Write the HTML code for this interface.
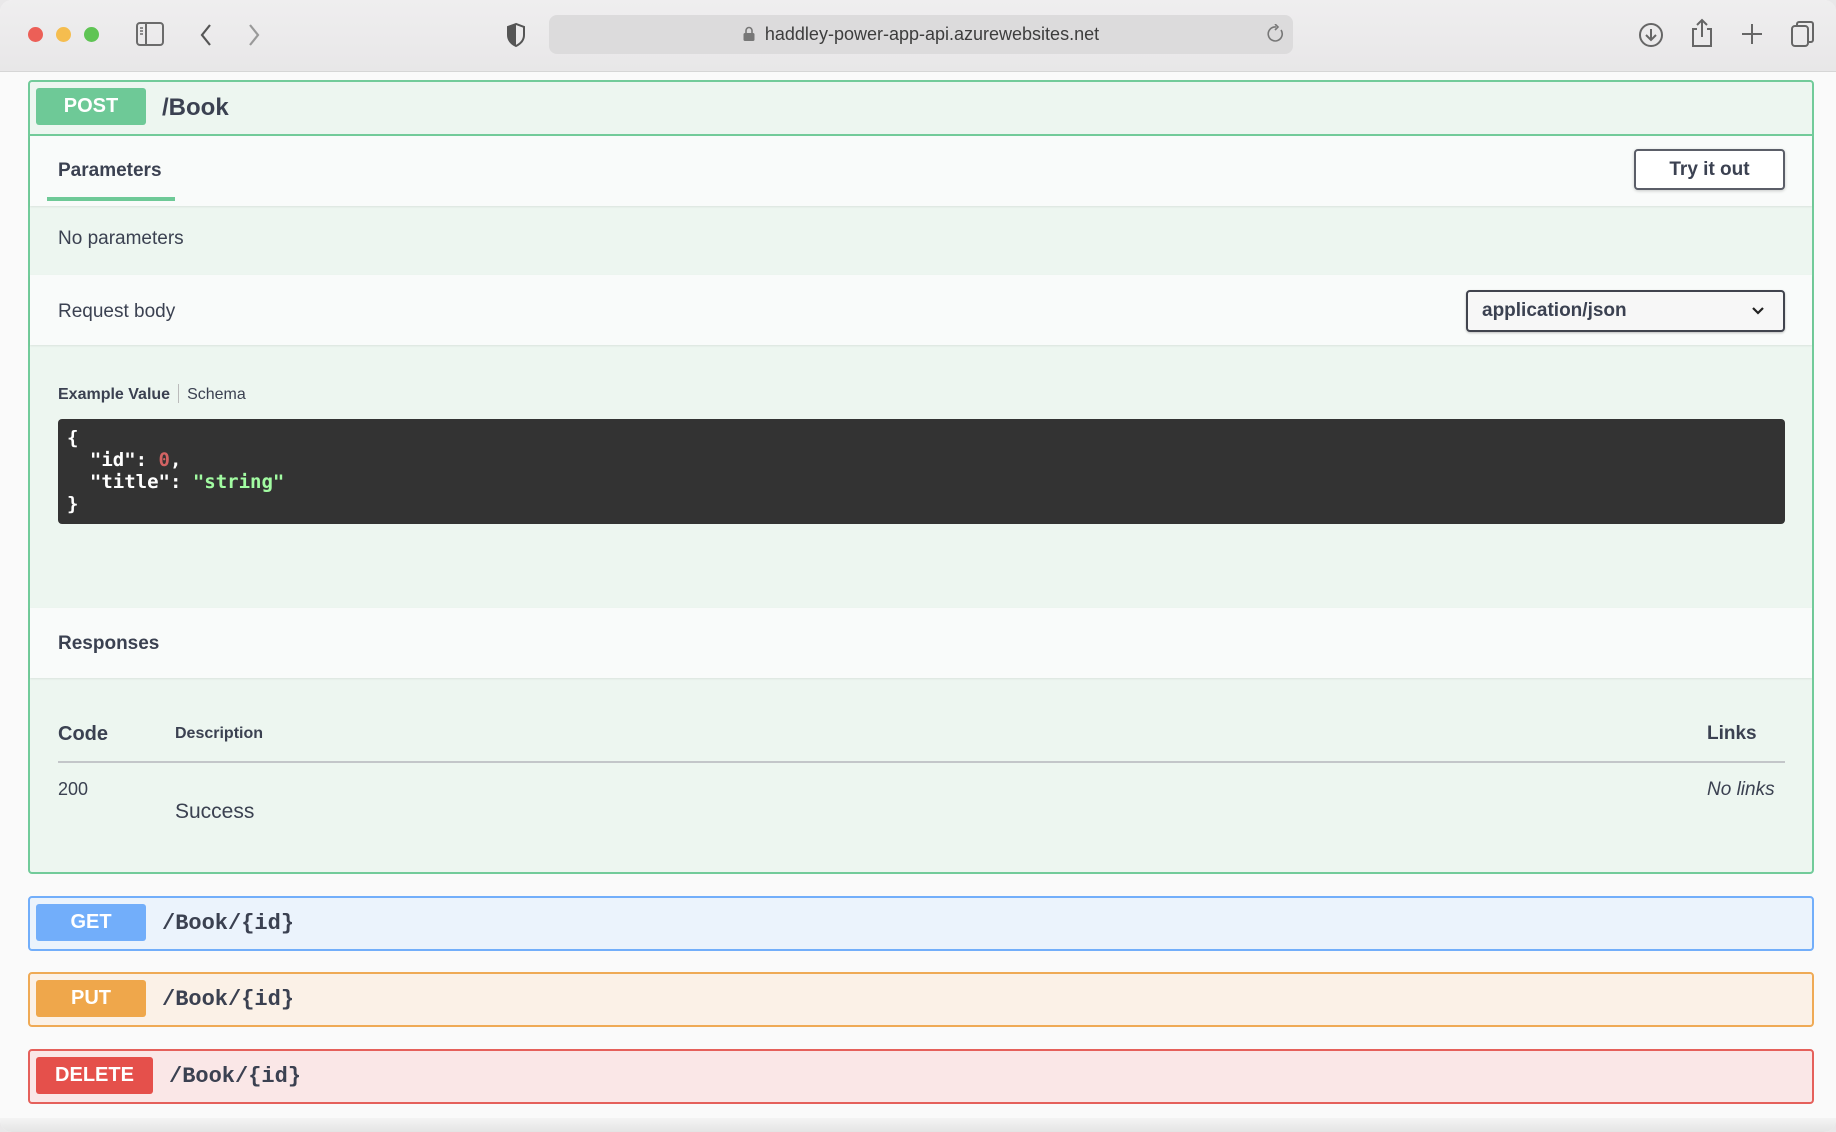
<!DOCTYPE html>
<html><head><meta charset="utf-8"><style>
*{box-sizing:border-box;margin:0;padding:0}
body{width:1836px;height:1132px;overflow:hidden;background:#e9e8e9;font-family:"Liberation Sans",sans-serif;color:#3b4151;position:relative}
.win{position:absolute;left:0;top:0;width:1836px;height:1132px;background:#fafafa;border-radius:12px;overflow:hidden}
.tb{position:absolute;left:0;top:0;width:1836px;height:72px;background:linear-gradient(#efeeef,#e8e7e8);border-bottom:1px solid #d6d6d6}
.dot{position:absolute;top:27px;width:15px;height:15px;border-radius:50%}
.url{position:absolute;left:549px;top:15px;width:744px;height:39px;background:#dcdbdc;border-radius:8px;font-size:18px;color:#3d3d3d;text-align:center;line-height:39px}
.abs{position:absolute}
.op{position:absolute;left:28px;width:1786px;border:2px solid;border-radius:4px}
.badge{position:absolute;left:6px;top:6px;width:110px;height:37px;border-radius:3px;color:#fff;font-weight:bold;font-size:20px;text-align:center;line-height:37px}
.path{position:absolute;top:0;line-height:51px;font-family:"Liberation Mono",monospace;font-weight:bold;font-size:22px;color:#3b4151}
.mono{font-family:"DejaVu Sans Mono","Liberation Mono",monospace}
</style></head><body><div class="win">
<div class="tb">
 <div class="dot" style="left:28px;background:#ec5f57"></div>
 <div class="dot" style="left:56px;background:#f5bd4f"></div>
 <div class="dot" style="left:84px;background:#5fc454"></div>
 <svg class="abs" style="left:136px;top:22px" width="28" height="24" viewBox="0 0 28 24"><rect x="1" y="1" width="26" height="22" rx="3" fill="none" stroke="#6b6b6b" stroke-width="2"/><line x1="10" y1="1" x2="10" y2="23" stroke="#6b6b6b" stroke-width="2"/><path d="M4 6h3M4 9h3M4 12h3" stroke="#6b6b6b" stroke-width="1.5"/></svg>
 <svg class="abs" style="left:198px;top:22px" width="16" height="26"><path d="M12 3L4 13l8 10" fill="none" stroke="#555" stroke-width="2.2"/></svg>
 <svg class="abs" style="left:246px;top:22px" width="16" height="26"><path d="M4 3l8 10-8 10" fill="none" stroke="#999" stroke-width="2.2"/></svg>
 <svg class="abs" style="left:506px;top:22px" width="20" height="26" viewBox="0 0 20 26"><path d="M10 2L2 5v8c0 6 4 9 8 11 4-2 8-5 8-11V5z" fill="none" stroke="#555" stroke-width="2"/><path d="M10 2L2 5v8c0 6 4 9 8 11z" fill="#555"/></svg>
 <div class="url"><svg width="12" height="15" style="margin-right:10px;vertical-align:-1px" viewBox="0 0 12 15"><path d="M3 7V4.5a3 3 0 0 1 6 0V7" fill="none" stroke="#777" stroke-width="1.6"/><rect x="0.5" y="7" width="11" height="8" rx="1.5" fill="#777"/></svg>haddley-power-app-api.azurewebsites.net</div>
 <svg class="abs" style="left:1265px;top:24px" width="20" height="22"><path d="M16 6a7 7 0 1 1-5-3" fill="none" stroke="#777" stroke-width="1.6"/><path d="M10 0l3 3-3 3" fill="none" stroke="#777" stroke-width="1.6"/></svg>
 <svg class="abs" style="left:1638px;top:22px" width="26" height="26"><circle cx="13" cy="13" r="11" fill="none" stroke="#666" stroke-width="2"/><path d="M13 7v11M8 13l5 5 5-5" fill="none" stroke="#666" stroke-width="2"/></svg>
 <svg class="abs" style="left:1690px;top:18px" width="24" height="30"><path d="M7 11H3v17h18V11h-4M12 2v17M7 7l5-5 5 5" fill="none" stroke="#666" stroke-width="2"/></svg>
 <svg class="abs" style="left:1740px;top:22px" width="24" height="24"><path d="M12 2v20M2 12h20" stroke="#666" stroke-width="2"/></svg>
 <svg class="abs" style="left:1790px;top:20px" width="26" height="28"><rect x="2" y="6" width="16" height="20" rx="3" fill="none" stroke="#666" stroke-width="2"/><path d="M7 6V4a2 2 0 0 1 2-2h12a2 2 0 0 1 2 2v16a2 2 0 0 1-2 2h-3" fill="none" stroke="#666" stroke-width="2"/></svg>
</div>

<div class="op" style="top:80px;height:794px;border-color:#72cb9a;background:#edf6f0">
 <div class="badge" style="background:#6ec997">POST</div>
 <div class="path" style="left:132px;font-family:'Liberation Sans',sans-serif;font-size:24px">/Book</div>
 <div class="abs" style="left:0;top:52px;width:1782px;border-top:2px solid #72cb9a"></div>
 <div class="abs" style="left:0;top:54px;width:1782px;height:70px;background:#f9fbfa;box-shadow:0 1px 2px rgba(0,0,0,.08)"></div>
 <div class="abs" style="left:28px;top:78px;font-weight:bold;font-size:19px">Parameters</div>
 <div class="abs" style="left:17px;top:115px;width:128px;height:4px;background:#6ec997"></div>
 <div class="abs" style="left:1604px;top:67px;width:151px;height:41px;border:2px solid #5b5e68;border-radius:4px;background:#fff;font-weight:bold;font-size:19px;text-align:center;line-height:37px;box-shadow:0 1px 3px rgba(0,0,0,.2)">Try it out</div>
 <div class="abs" style="left:28px;top:146px;font-size:19px">No parameters</div>
 <div class="abs" style="left:0;top:193px;width:1782px;height:70px;background:#f9fbfa;box-shadow:0 1px 2px rgba(0,0,0,.08)"></div>
 <div class="abs" style="left:28px;top:219px;font-size:19px">Request body</div>
 <div class="abs" style="left:1436px;top:208px;width:319px;height:42px;border:2px solid #41444e;border-radius:4px;background:#f7f7f7;font-weight:bold;font-size:19px;line-height:38px;padding-left:14px;box-shadow:0 1px 2px rgba(0,0,0,.25)">application/json
  <svg class="abs" style="right:18px;top:14px" width="14" height="10"><path d="M2 2l5 5 5-5" fill="none" stroke="#222" stroke-width="2.2"/></svg></div>
 <div class="abs" style="left:28px;top:302px;font-size:16px"><b>Example Value</b><span style="display:inline-block;width:1px;height:19px;background:#bbb;margin:0 8px;vertical-align:-4px"></span>Schema</div>
 <div class="abs mono" style="left:28px;top:337px;width:1727px;height:105px;background:#333;border-radius:4px;color:#fff;font-weight:bold;font-size:19px;line-height:22px;padding:8px 0 0 9px;white-space:pre">{
  "id": <span style="color:#d36363">0</span>,
  "title": <span style="color:#a2fca2">"string"</span>
}</div>
 <div class="abs" style="left:0;top:526px;width:1782px;height:70px;background:#f9fbfa;box-shadow:0 1px 2px rgba(0,0,0,.08)"></div>
 <div class="abs" style="left:28px;top:551px;font-weight:bold;font-size:19px">Responses</div>
 <div class="abs" style="left:28px;top:641px;font-weight:bold;font-size:20px">Code</div>
 <div class="abs" style="left:145px;top:643px;font-weight:bold;font-size:16px">Description</div>
 <div class="abs" style="left:1677px;top:641px;font-weight:bold;font-size:19px">Links</div>
 <div class="abs" style="left:28px;top:679px;width:1727px;height:2px;background:#c3c6c9"></div>
 <div class="abs" style="left:28px;top:697px;font-size:18px">200</div>
 <div class="abs" style="left:145px;top:718px;font-size:21px">Success</div>
 <div class="abs" style="left:1677px;top:697px;font-size:19px;font-style:italic">No links</div>
</div>

<div class="op" style="top:896px;height:55px;border-color:#72aefa;background:#ebf3fc"><div class="badge" style="background:#72aefa">GET</div><div class="path" style="left:132px">/Book/{id}</div></div>
<div class="op" style="top:972px;height:55px;border-color:#efaa55;background:#fbf1e7"><div class="badge" style="background:#efa74b">PUT</div><div class="path" style="left:132px">/Book/{id}</div></div>
<div class="op" style="top:1049px;height:55px;border-color:#e5605b;background:#fae7e7"><div class="badge" style="background:#e5504b;width:117px">DELETE</div><div class="path" style="left:139px">/Book/{id}</div></div>
<div class="abs" style="left:0;top:1118px;width:1836px;height:14px;background:linear-gradient(#f4f4f4,#e4e4e4)"></div>
</div></body></html>
